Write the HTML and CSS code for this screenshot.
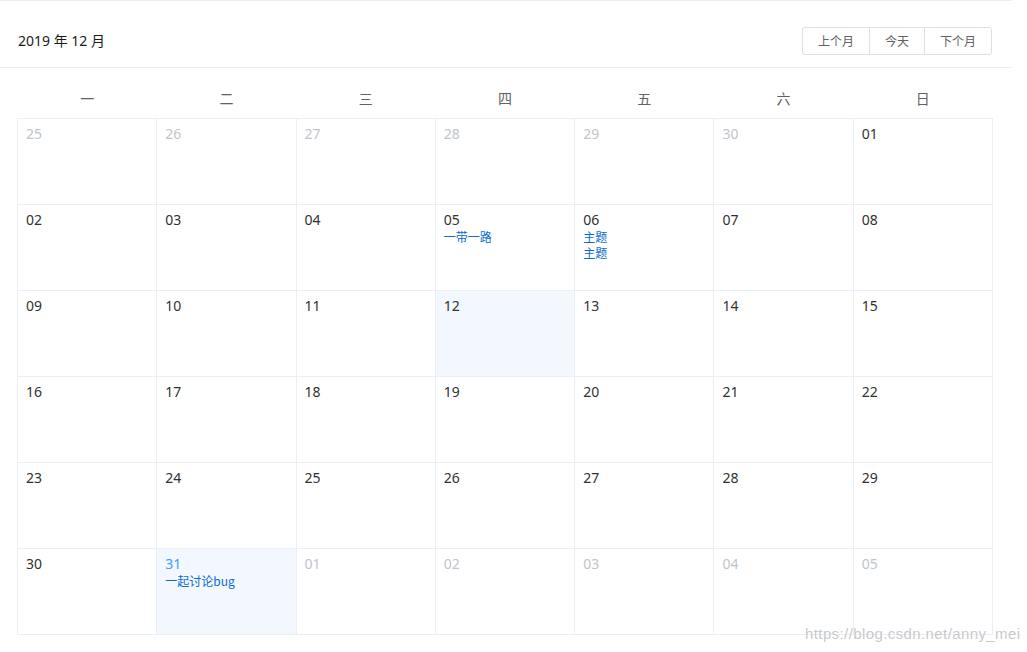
FILE: index.html
```html
<!DOCTYPE html>
<html lang="zh">
<head>
<meta charset="utf-8">
<title>Calendar</title>
<link rel="stylesheet" href="styles.css">
</head>
<body>
<div class="calendar">
  <div class="cal-header">
    <div class="cal-title">2019 年 12 月</div>
    <div class="btn-group">
      <button class="btn">上个月</button>
      <button class="btn">今天</button>
      <button class="btn">下个月</button>
    </div>
  </div>
  <div class="cal-body">
    <table class="cal-table">
      <thead>
        <tr><th>一</th><th>二</th><th>三</th><th>四</th><th>五</th><th>六</th><th>日</th></tr>
      </thead>
      <tbody>
        <tr>
          <td class="prev"><div class="day"><div class="num">25</div></div></td>
          <td class="prev"><div class="day"><div class="num">26</div></div></td>
          <td class="prev"><div class="day"><div class="num">27</div></div></td>
          <td class="prev"><div class="day"><div class="num">28</div></div></td>
          <td class="prev"><div class="day"><div class="num">29</div></div></td>
          <td class="prev"><div class="day"><div class="num">30</div></div></td>
          <td><div class="day"><div class="num">01</div></div></td>
        </tr>
        <tr>
          <td><div class="day"><div class="num">02</div></div></td>
          <td><div class="day"><div class="num">03</div></div></td>
          <td><div class="day"><div class="num">04</div></div></td>
          <td><div class="day"><div class="num">05</div><div class="event">一带一路</div></div></td>
          <td><div class="day"><div class="num">06</div><div class="event">主题</div><div class="event">主题</div></div></td>
          <td><div class="day"><div class="num">07</div></div></td>
          <td><div class="day"><div class="num">08</div></div></td>
        </tr>
        <tr>
          <td><div class="day"><div class="num">09</div></div></td>
          <td><div class="day"><div class="num">10</div></div></td>
          <td><div class="day"><div class="num">11</div></div></td>
          <td class="selected"><div class="day"><div class="num">12</div></div></td>
          <td><div class="day"><div class="num">13</div></div></td>
          <td><div class="day"><div class="num">14</div></div></td>
          <td><div class="day"><div class="num">15</div></div></td>
        </tr>
        <tr>
          <td><div class="day"><div class="num">16</div></div></td>
          <td><div class="day"><div class="num">17</div></div></td>
          <td><div class="day"><div class="num">18</div></div></td>
          <td><div class="day"><div class="num">19</div></div></td>
          <td><div class="day"><div class="num">20</div></div></td>
          <td><div class="day"><div class="num">21</div></div></td>
          <td><div class="day"><div class="num">22</div></div></td>
        </tr>
        <tr>
          <td><div class="day"><div class="num">23</div></div></td>
          <td><div class="day"><div class="num">24</div></div></td>
          <td><div class="day"><div class="num">25</div></div></td>
          <td><div class="day"><div class="num">26</div></div></td>
          <td><div class="day"><div class="num">27</div></div></td>
          <td><div class="day"><div class="num">28</div></div></td>
          <td><div class="day"><div class="num">29</div></div></td>
        </tr>
        <tr>
          <td><div class="day"><div class="num">30</div></div></td>
          <td class="today selected"><div class="day"><div class="num">31</div><div class="event">一起讨论bug</div></div></td>
          <td class="prev"><div class="day"><div class="num">01</div></div></td>
          <td class="prev"><div class="day"><div class="num">02</div></div></td>
          <td class="prev"><div class="day"><div class="num">03</div></div></td>
          <td class="prev"><div class="day"><div class="num">04</div></div></td>
          <td class="prev"><div class="day"><div class="num">05</div></div></td>
        </tr>
      </tbody>
    </table>
  </div>
</div>
<div class="watermark">https://blog.csdn.net/anny_mei</div>
</body>
</html>
```

FILE: styles.css
```css
html, body {
  margin: 0;
  padding: 0;
  background: #fff;
}
body {
  font-family: "Noto Sans", "Noto Sans CJK SC", sans-serif;
  font-size: 14px;
  color: #303133;
  position: relative;
  height: 652px;
  overflow: hidden;
}
.calendar {
  width: 1012px;
  border-top: 1px solid #ebeef5;
}
.cal-header {
  display: flex;
  justify-content: space-between;
  align-items: center;
  padding: 26px 20px 12px 18px;
  border-bottom: 1px solid #ebeef5;
}
.cal-title {
  color: #1a1a1a;
  font-size: 14px;
  line-height: 20px;
}
.btn-group {
  display: flex;
}
.btn {
  font-family: "Noto Sans CJK SC", sans-serif;
  font-size: 12px;
  line-height: 12px;
  height: 28px;
  padding: 0 15px;
  color: #606266;
  background: #fff;
  border: 1px solid #dcdfe6;
  border-radius: 0;
  margin: 0;
  cursor: pointer;
}
.btn + .btn {
  margin-left: -1px;
}
.btn:first-child {
  border-radius: 3px 0 0 3px;
}
.btn:last-child {
  border-radius: 0 3px 3px 0;
}
.cal-body {
  padding: 12px 19px 0 17px;
}
.cal-table {
  width: 976px;
  table-layout: fixed;
  border-collapse: collapse;
}
.cal-table th {
  height: 35px;
  padding: 0 0 3px 0;
  font-weight: normal;
  color: #606266;
  font-family: "Noto Sans CJK SC", sans-serif;
  font-size: 14px;
  text-align: center;
  vertical-align: middle;
}
.cal-table td {
  border: 1px solid #ebeef5;
  padding: 0;
  vertical-align: top;
}
.day {
  box-sizing: border-box;
  height: 85px;
  padding: 6px 8px 8px 8px;
}
.num {
  font-size: 14px;
  line-height: 18px;
  color: #303133;
}
.event {
  font-family: "Noto Sans CJK SC", sans-serif;
  font-size: 12px;
  line-height: 16px;
  color: #0b6bd1;
}
.prev .num {
  color: #c0c4cc;
}
.selected {
  background: #f2f8fe;
}
.today .num {
  color: #409eff;
}
.watermark {
  position: absolute;
  left: 805px;
  top: 625px;
  font-family: "Liberation Sans", Arial, sans-serif;
  font-size: 15px;
  line-height: 18px;
  color: rgba(190, 190, 195, 0.85);
  letter-spacing: 0.4px;
}
```
